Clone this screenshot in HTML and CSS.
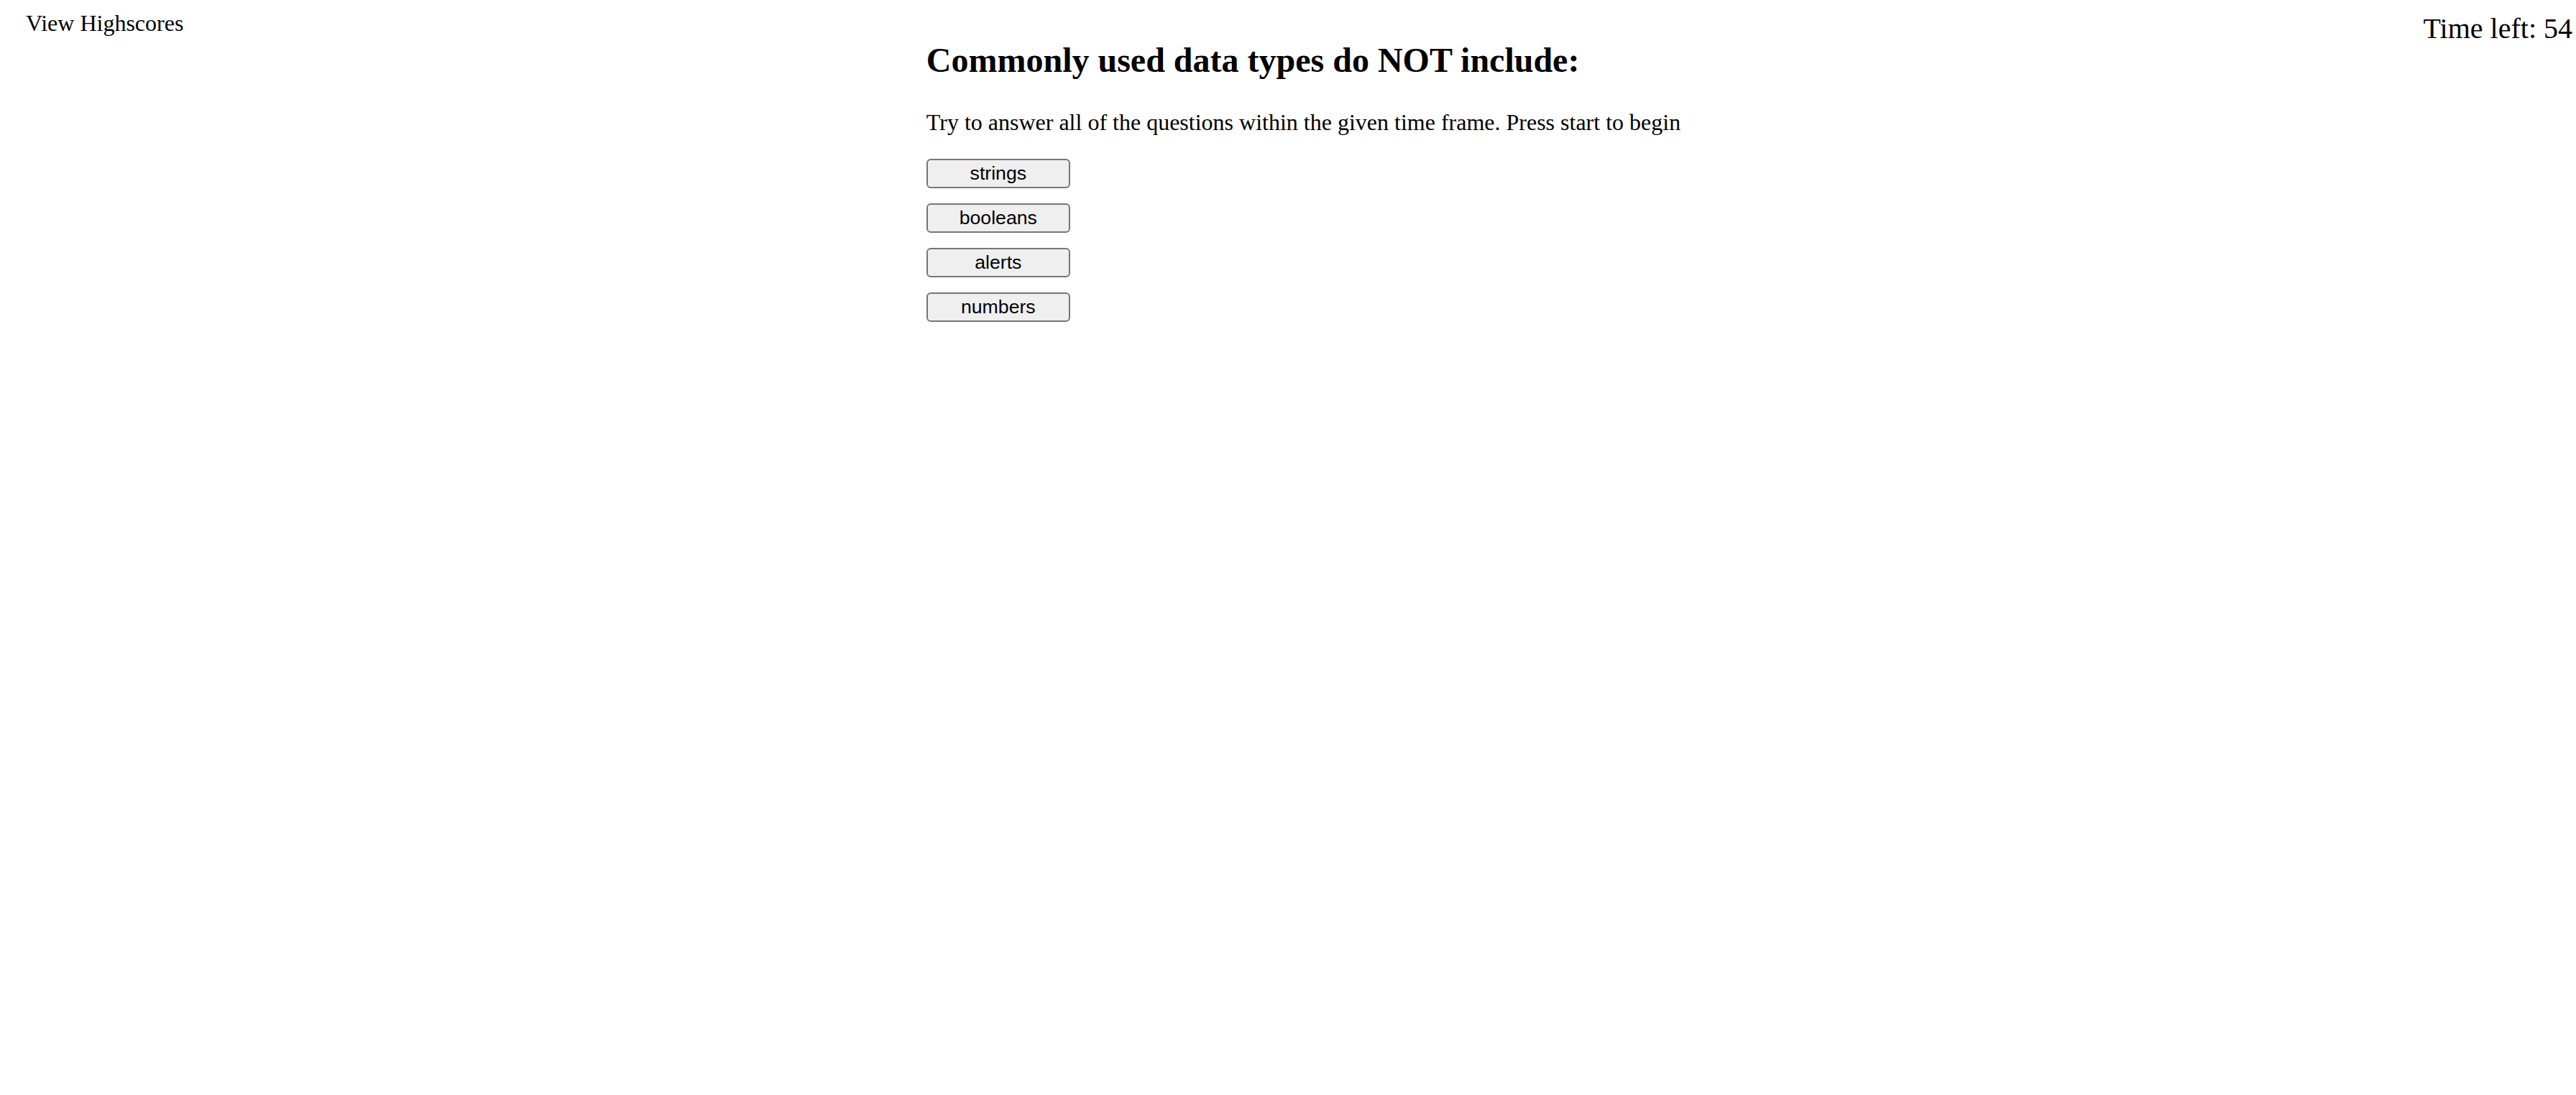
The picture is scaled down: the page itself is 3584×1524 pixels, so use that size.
FILE: index.html
```html
<!DOCTYPE html>
<html lang="en">
<head>
<meta charset="utf-8">
<title>Code Quiz</title>
<link rel="stylesheet" href="styles.css">
</head>
<body>
<div class="page">
  <div class="nav">View Highscores</div>
  <main class="quiz">
    <h2 class="question">Commonly used data types do NOT include:</h2>
    <p class="intro">Try to answer all of the questions within the given time frame. Press start to begin</p>
    <div class="answers">
      <button class="answer">strings</button>
      <button class="answer">booleans</button>
      <button class="answer">alerts</button>
      <button class="answer">numbers</button>
    </div>
  </main>
  <div class="timer">Time left: 54</div>
</div>
</body>
</html>
```
FILE: styles.css
```css
html, body {
  margin: 0;
  padding: 0;
  background: #ffffff;
  color: #000000;
  font-family: "Liberation Serif", "Times New Roman", serif;
}

.page {
  display: flex;
  justify-content: space-between;
  align-items: flex-start;
  padding: 15px 5px 0 36px;
  min-height: 1509px;
}

.nav {
  font-size: 32px;
  line-height: normal;
  margin-top: -1px;
}

.timer {
  font-size: 40px;
  line-height: normal;
  margin-top: 1px;
}

.quiz {
  display: flex;
  flex-direction: column;
  align-items: flex-start;
  padding-top: 1px;
}

.question {
  font-size: 48px;
  font-weight: bold;
  margin: 40px 0 41px;
  line-height: normal;
}

.intro {
  font-size: 32px;
  margin: 0 0 32px;
  line-height: normal;
}

.answers {
  display: flex;
  flex-direction: column;
  gap: 21px;
}

.answer {
  width: 200px;
  height: 41px;
  padding: 0;
  font-family: "Liberation Sans", Arial, sans-serif;
  font-size: 26.67px;
  color: #000000;
  background: #efefef;
  border: 2px solid #767676;
  border-radius: 6px;
  text-align: center;
}
```
